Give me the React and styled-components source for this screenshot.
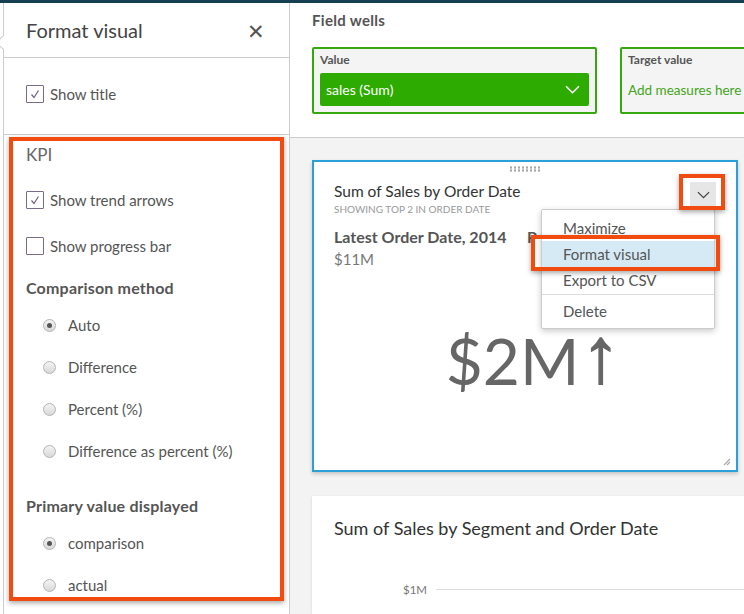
import React from 'react';
import styled, { createGlobalStyle } from 'styled-components';

const GlobalStyle = createGlobalStyle`
  html, body {
    margin: 0;
    padding: 0;
  }
  body {
    width: 744px;
    height: 614px;
    overflow: hidden;
    background: #fff;
    font-family: Lato, "Open Sans", sans-serif;
    color: #555;
  }
`;

const Page = styled.div`
  display: flex;
  flex-direction: column;
  height: 614px;
`;

const TopBar = styled.div`
  height: 3px;
  flex-shrink: 0;
  background: #173f52;
`;

const Main = styled.div`
  display: flex;
  flex: 1;
  min-height: 0;
`;

/* ---------- left format panel ---------- */

const SidePanel = styled.aside`
  position: relative;
  box-sizing: border-box;
  width: 287px;
  margin-left: 3px;
  flex-shrink: 0;
  border-left: 1px solid #ccc;
  border-right: 1px solid #ccc;
  background: #fff;
  display: flex;
  flex-direction: column;

  &::before {
    content: '';
    position: absolute;
    left: -6px;
    top: 34px;
    width: 10px;
    height: 10px;
    background: #fff;
    border-left: 1px solid #ccc;
    border-bottom: 1px solid #ccc;
    transform: rotate(45deg);
  }
`;

const PanelHeader = styled.div`
  height: 54px;
  flex-shrink: 0;
  border-bottom: 1px solid #ccc;
  padding: 0 24px 0 22px;
  display: flex;
  align-items: center;
  justify-content: space-between;
`;

const PanelTitle = styled.h2`
  margin: 0;
  font-size: 20px;
  font-weight: 400;
  color: #444;
`;

const CloseButton = styled.span`
  font-size: 21px;
  color: #555;
  line-height: 1;
`;

const TitleSection = styled.div`
  height: 77px;
  flex-shrink: 0;
  border-bottom: 1px solid #ccc;
  padding: 27px 0 0 22px;
  box-sizing: border-box;
`;

const KpiSection = styled.section`
  box-sizing: border-box;
  height: 464px;
  margin: 2px 5px 0 5px;
  border: 4px solid #f24b0f;
  box-shadow: 0 2px 5px rgba(0, 0, 0, 0.35);
  padding: 4px 0 0 13px;
  display: flex;
  flex-direction: column;
  overflow: hidden;
`;

const SectionLabel = styled.div`
  font-size: 17px;
  line-height: 20px;
  color: #666;
`;

const GroupLabel = styled.div`
  margin-top: ${(p) => p.$mt}px;
  font-size: 16px;
  line-height: 20px;
  font-weight: 700;
  letter-spacing: 0.2px;
  color: #555;
`;

const CheckRow = styled.label`
  display: flex;
  align-items: center;
  gap: 6px;
  height: 18px;
  margin-top: ${(p) => p.$mt || 0}px;
  font-size: 15px;
  color: #555;
`;

const Box = styled.span`
  box-sizing: border-box;
  width: 18px;
  height: 18px;
  border: 1px solid #7a6b86;
  border-radius: 1px;
  display: flex;
  align-items: center;
  justify-content: center;
`;

const RadioRow = styled.label`
  display: flex;
  align-items: center;
  gap: 12px;
  height: 20px;
  margin-top: ${(p) => p.$mt}px;
  padding-left: 17px;
  font-size: 15px;
  color: #555;
`;

const RadioDot = styled.span`
  box-sizing: border-box;
  width: 13px;
  height: 13px;
  border-radius: 50%;
  border: 1px solid #b4b4b4;
  background: linear-gradient(#f4f4f4, #d8d8d8);
  display: flex;
  align-items: center;
  justify-content: center;

  &::after {
    content: '';
    width: 5px;
    height: 5px;
    border-radius: 50%;
    background: ${(p) => (p.$checked ? '#555' : 'transparent')};
  }
`;

const Checkbox = ({ checked, label, mt }) => (
  <CheckRow $mt={mt}>
    <Box>
      {checked && (
        <svg width="10" height="10" viewBox="0 0 10 10">
          <path d="M1.5 5.5 L4 8.5 L8.5 1.5" fill="none" stroke="#6f5f7c" strokeWidth="1.2" />
        </svg>
      )}
    </Box>
    {label}
  </CheckRow>
);

const Radio = ({ checked, label, mt }) => (
  <RadioRow $mt={mt}>
    <RadioDot $checked={checked} />
    {label}
  </RadioRow>
);

/* ---------- right side ---------- */

const Workspace = styled.div`
  flex: 1;
  min-width: 0;
  display: flex;
  flex-direction: column;
`;

const FieldWells = styled.div`
  height: 135px;
  flex-shrink: 0;
  border-bottom: 1px solid #ccc;
  padding: 9px 0 0 22px;
  box-sizing: border-box;
  background: #fff;
`;

const WellsTitle = styled.div`
  font-size: 15px;
  line-height: 17px;
  font-weight: 700;
  letter-spacing: 0.3px;
  color: #555;
`;

const WellRow = styled.div`
  display: flex;
  gap: 23px;
  margin-top: 18px;
`;

const Well = styled.div`
  box-sizing: border-box;
  flex-shrink: 0;
  width: 285px;
  height: 67px;
  border: 2px solid #35a80e;
  border-radius: 2px;
  background: #f4f4f4;
  padding: 3px 6px 0;
`;

const WellLabel = styled.div`
  font-size: 12px;
  line-height: 16px;
  font-weight: 700;
  color: #555;
`;

const FieldPill = styled.div`
  margin-top: 5px;
  height: 33px;
  border-radius: 2px;
  background: #2eab00;
  color: #fff;
  font-size: 14px;
  padding: 0 9px 0 6px;
  display: flex;
  align-items: center;
  justify-content: space-between;
`;

const EmptyHint = styled.div`
  margin-top: 5px;
  height: 33px;
  display: flex;
  align-items: center;
  font-size: 13.5px;
  color: #43a51a;
  white-space: nowrap;
`;

const Canvas = styled.div`
  flex: 1;
  min-height: 0;
  background: #f3f3f3;
  padding: 22px 0 0 22px;
  display: flex;
  flex-direction: column;
  gap: 24px;
  overflow: hidden;
`;

const KpiCard = styled.div`
  position: relative;
  box-sizing: border-box;
  width: 426px;
  height: 312px;
  flex-shrink: 0;
  background: #fff;
  border: 2px solid #2a9fd8;
  box-shadow: 0 2px 4px rgba(0, 0, 0, 0.2);
  display: flex;
  flex-direction: column;
`;

const Grip = styled.div`
  align-self: center;
  margin-top: 4px;
  width: 32px;
  height: 6px;
  background-image: radial-gradient(circle, #a8a8a8 1px, transparent 1.3px);
  background-size: 4px 3px;
`;

const CardHeader = styled.div`
  margin-top: 10px;
  padding: 0 20px;
  display: flex;
  justify-content: space-between;
  align-items: flex-start;
`;

const CardTitle = styled.div`
  font-size: 15.5px;
  line-height: 18px;
  color: #333;
`;

const CardSubtitle = styled.div`
  margin-top: 3px;
  font-size: 10px;
  line-height: 12px;
  color: #999;
  text-transform: uppercase;
`;

const MenuButton = styled.div`
  width: 26px;
  height: 26px;
  background: #e6e6e6;
  display: flex;
  align-items: center;
  justify-content: center;
`;

const Comparison = styled.div`
  margin-top: 13px;
  padding: 0 20px;
  display: flex;
`;

const ComparisonCol = styled.div`
  flex: 0 0 ${(p) => p.$width};
  overflow: hidden;
  display: flex;
  flex-direction: column;
  gap: 4px;
`;

const ComparisonLabel = styled.div`
  font-size: 16px;
  line-height: 18px;
  font-weight: 700;
  color: #555;
  white-space: nowrap;
`;

const ComparisonValue = styled.div`
  font-size: 15px;
  line-height: 18px;
  color: #777;
  white-space: nowrap;
`;

const BigValue = styled.div`
  margin-top: 58px;
  align-self: center;
  display: flex;
  align-items: baseline;
  padding-left: 16px;
  height: 70px;
  font-size: 64px;
  line-height: 70px;
  font-weight: 400;
  color: #666;
`;

const TrendArrow = styled.span`
  font-family: "Liberation Sans", Arial, sans-serif;
  font-size: 78px;
  line-height: 40px;
  color: #666;
  -webkit-text-stroke: 1.4px #666;
  margin-left: 2px;
  position: relative;
  top: -3px;
`;

const ResizeHandle = styled.svg`
  position: absolute;
  right: 5px;
  bottom: 4px;
`;

const Menu = styled.ul`
  position: absolute;
  left: 227px;
  top: 47px;
  box-sizing: border-box;
  width: 174px;
  margin: 0;
  padding: 5px 0 4px;
  list-style: none;
  background: #fff;
  border: 1px solid #ccc;
  border-radius: 2px;
  box-shadow: 0 2px 6px rgba(0, 0, 0, 0.22);
  z-index: 2;
`;

const MenuItem = styled.li`
  height: 26px;
  padding-left: 21px;
  display: flex;
  align-items: center;
  font-size: 15px;
  color: #555;
  background: ${(p) => (p.$active ? '#d6eaf6' : 'transparent')};
`;

const MenuDivider = styled.li`
  height: 1px;
  margin: 1px 0 3px;
  background: #ddd;
`;

const Highlight = styled.div`
  position: absolute;
  left: ${(p) => p.$x}px;
  top: ${(p) => p.$y}px;
  width: ${(p) => p.$w}px;
  height: ${(p) => p.$h}px;
  box-sizing: border-box;
  border: 4px solid #f24b0f;
  box-shadow: 0 2px 5px rgba(0, 0, 0, 0.35);
  z-index: 3;
`;

const ChartCard = styled.div`
  width: 440px;
  flex: 1;
  background: #fff;
  box-shadow: 0 1px 3px rgba(0, 0, 0, 0.12);
  padding: 22px 0 0 22px;
  box-sizing: border-box;
`;

const ChartTitle = styled.div`
  font-size: 18px;
  line-height: 20px;
  color: #333;
`;

const AxisRow = styled.div`
  margin-top: 45px;
  display: flex;
  align-items: center;
`;

const AxisLabel = styled.span`
  width: 93px;
  text-align: right;
  font-size: 11.5px;
  color: #777;
`;

const GridLine = styled.span`
  flex: 1;
  height: 1px;
  margin-left: 9px;
  background: #ddd;
`;

const Chevron = ({ color, size = 14 }) => (
  <svg width={size} height={size * 0.6} viewBox="0 0 14 8">
    <path d="M1 1 L7 7 L13 1" fill="none" stroke={color} strokeWidth="1.4" />
  </svg>
);

export default function App() {
  return (
    <Page>
      <GlobalStyle />
      <TopBar />
      <Main>
        <SidePanel>
          <PanelHeader>
            <PanelTitle>Format visual</PanelTitle>
            <CloseButton>✕</CloseButton>
          </PanelHeader>
          <TitleSection>
            <Checkbox checked label="Show title" />
          </TitleSection>
          <KpiSection>
            <SectionLabel>KPI</SectionLabel>
            <Checkbox checked label="Show trend arrows" mt={26} />
            <Checkbox label="Show progress bar" mt={28} />
            <GroupLabel $mt={23}>Comparison method</GroupLabel>
            <Radio checked label="Auto" mt={17} />
            <Radio label="Difference" mt={22} />
            <Radio label="Percent (%)" mt={22} />
            <Radio label="Difference as percent (%)" mt={22} />
            <GroupLabel $mt={35}>Primary value displayed</GroupLabel>
            <Radio checked label="comparison" mt={17} />
            <Radio label="actual" mt={22} />
          </KpiSection>
        </SidePanel>

        <Workspace>
          <FieldWells>
            <WellsTitle>Field wells</WellsTitle>
            <WellRow>
              <Well>
                <WellLabel>Value</WellLabel>
                <FieldPill>
                  sales (Sum)
                  <Chevron color="#fff" size={15} />
                </FieldPill>
              </Well>
              <Well>
                <WellLabel>Target value</WellLabel>
                <EmptyHint>Add measures here</EmptyHint>
              </Well>
            </WellRow>
          </FieldWells>

          <Canvas>
            <KpiCard>
              <Grip />
              <CardHeader>
                <div>
                  <CardTitle>Sum of Sales by Order Date</CardTitle>
                  <CardSubtitle>Showing top 2 in Order Date</CardSubtitle>
                </div>
                <MenuButton>
                  <Chevron color="#444" size={13} />
                </MenuButton>
              </CardHeader>
              <Comparison>
                <ComparisonCol $width="193px">
                  <ComparisonLabel>Latest Order Date, 2014</ComparisonLabel>
                  <ComparisonValue>$11M</ComparisonValue>
                </ComparisonCol>
                {/* the rest of this column sits under the open menu */}
                <ComparisonCol $width="10px">
                  <ComparisonLabel>Previous Order Date, 2013</ComparisonLabel>
                </ComparisonCol>
              </Comparison>
              <BigValue>
                $2M
                <TrendArrow>↑</TrendArrow>
              </BigValue>
              <ResizeHandle width="8" height="8" viewBox="0 0 8 8">
                <path d="M1 7 L7 1 M4 7 L7 4" stroke="#aaa" strokeWidth="1.2" />
              </ResizeHandle>

              <Menu>
                <MenuItem>Maximize</MenuItem>
                <MenuItem $active>Format visual</MenuItem>
                <MenuItem>Export to CSV</MenuItem>
                <MenuDivider />
                <MenuItem>Delete</MenuItem>
              </Menu>
              <Highlight $x={365} $y={12} $w={46} $h={36} />
              <Highlight $x={217} $y={73} $w={189} $h={36} />
            </KpiCard>

            <ChartCard>
              <ChartTitle>Sum of Sales by Segment and Order Date</ChartTitle>
              <AxisRow>
                <AxisLabel>$1M</AxisLabel>
                <GridLine />
              </AxisRow>
            </ChartCard>
          </Canvas>
        </Workspace>
      </Main>
    </Page>
  );
}
